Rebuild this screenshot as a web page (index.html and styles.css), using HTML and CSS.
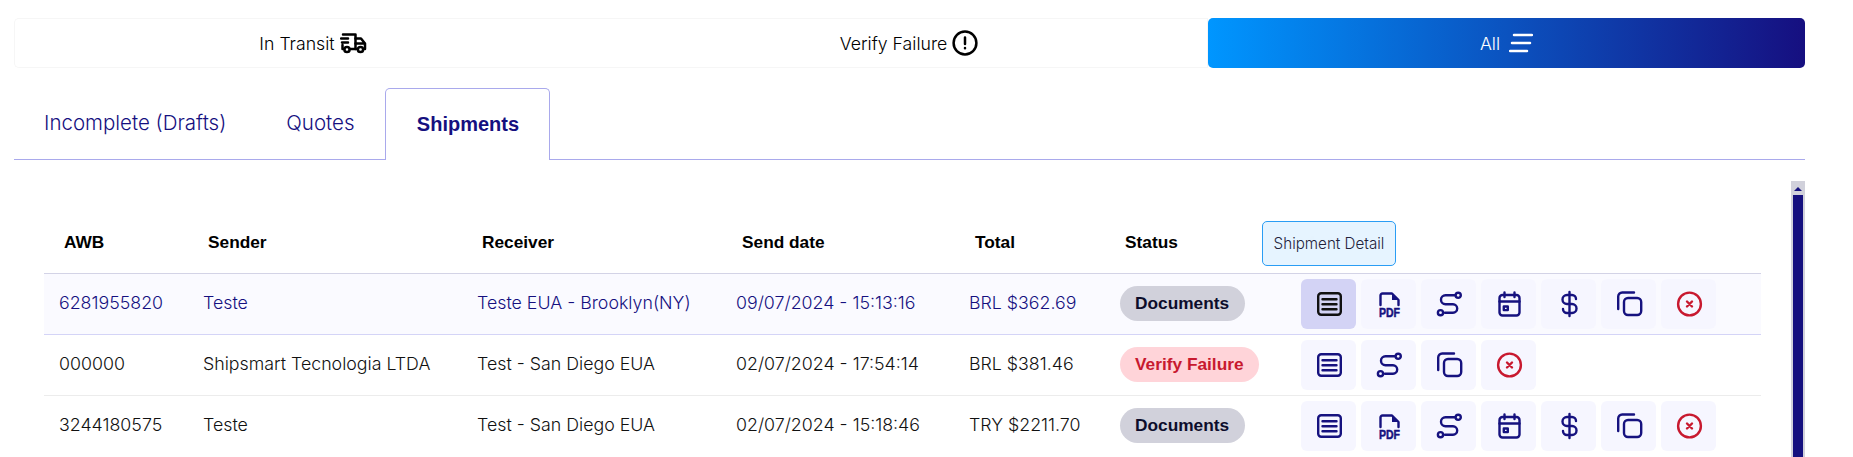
FILE: index.html
```html
<!DOCTYPE html>
<html lang="en">
<head>
    <meta charset="UTF-8">
    <title>Shipments</title>
    <link rel="stylesheet" href="styles.css">
</head>
<body>
    <svg class="icon-defs" width="0" height="0">
        <symbol id="i-detail" viewBox="0 0 30 30">
            <rect x="4.2" y="4.3" width="22.6" height="21.4" rx="3"/>
            <path d="M8.5 10.3H22.5M8.5 15.3H22.5M8.5 20.3H22.5"/>
        </symbol>
        <symbol id="i-route" viewBox="0 0 30 30">
            <circle cx="24.2" cy="6.3" r="2.6"/>
            <circle cx="6.5" cy="23.7" r="2.6"/>
            <path d="M20.6 6.3H11.5a4.5 4.5 0 0 0 0 9H19a4.2 4.2 0 0 1 0 8.4H11"/>
        </symbol>
        <symbol id="i-calendar" viewBox="0 0 30 30">
            <rect x="5.5" y="6" width="20" height="20.5" rx="3"/>
            <path d="M5.5 12.5H25.5M10.5 3.5V8M20.5 3.5V8"/>
            <rect class="solid" x="9.8" y="17.5" width="4" height="3.6"/>
        </symbol>
        <symbol id="i-dollar" viewBox="0 0 30 30">
            <path d="M22 10a4 4 0 0 0-4-4H13a4.5 4.5 0 0 0 0 9h5a4.5 4.5 0 0 1 0 9H13a4 4 0 0 1-4-4M15.5 3V27"/>
        </symbol>
        <symbol id="i-copy" viewBox="0 0 30 30">
            <rect x="10" y="9" width="17.2" height="17" rx="4"/>
            <path d="M4.2 20V7.5A4 4 0 0 1 8.2 3.5H20"/>
        </symbol>
        <symbol id="i-cancel" viewBox="0 0 30 30">
            <circle cx="15.5" cy="15" r="11.4"/>
            <path d="M13 12.5L18 17.5M18 12.5L13 17.5"/>
        </symbol>
    </svg>

    <div class="filters">
        <button class="filter">In Transit
            <svg class="filter-icon" width="27" height="22" viewBox="0 0 27 22">
                <path d="M3 2.5H15.5V17H9.8M4.2 17H2.5V13M1 6.5H8M2 10.5H8"/>
                <path d="M15.5 6.5H21L25 11.5V17H23.3M15.5 11.5H25M15.5 17H17.7"/>
                <circle cx="7" cy="17.5" r="2.6"/>
                <circle cx="20.5" cy="17.5" r="2.6"/>
            </svg>
        </button>
        <button class="filter">Verify Failure
            <svg class="filter-icon" width="26" height="26" viewBox="0 0 26 26">
                <circle cx="13" cy="13" r="11.4"/>
                <path d="M13 7.5V14M13 18V18.2"/>
            </svg>
        </button>
        <button class="filter active">All
            <svg class="filter-icon" width="24" height="20" viewBox="0 0 24 20">
                <path d="M5 2H23M3 10H21M1 18H18"/>
            </svg>
        </button>
    </div>

    <div class="tabs">
        <a class="tab">Incomplete (Drafts)</a>
        <a class="tab">Quotes</a>
        <a class="tab selected">Shipments</a>
    </div>

    <div class="panel">
        <div class="table-wrap">
            <table class="shipments">
                <colgroup>
                    <col class="c-awb"><col class="c-sender"><col class="c-receiver">
                    <col class="c-date"><col class="c-total"><col class="c-status"><col>
                </colgroup>
                <thead>
                    <tr>
                        <th>AWB</th>
                        <th>Sender</th>
                        <th>Receiver</th>
                        <th>Send date</th>
                        <th>Total</th>
                        <th>Status</th>
                        <th class="th-actions">Actions<span class="tooltip">Shipment Detail</span></th>
                    </tr>
                </thead>
                <tbody>
                    <tr class="hovered">
                        <td>6281955820</td>
                        <td>Teste</td>
                        <td>Teste EUA - Brooklyn(NY)</td>
                        <td>09/07/2024 - 15:13:16</td>
                        <td>BRL $362.69</td>
                        <td><span class="badge">Documents</span></td>
                        <td>
                            <div class="actions">
                                <button class="act focus"><svg><use href="#i-detail"/></svg></button>
                                <button class="act">
                                    <svg viewBox="0 0 30 30">
                                        <path d="M6.5 16V6.5a2 2 0 0 1 2-2H18L24.5 11V16"/>
                                        <path class="solid" d="M18 5L24 11H18Z"/>
                                        <text class="pdf-text" x="5" y="27.5" textLength="21" lengthAdjust="spacingAndGlyphs">PDF</text>
                                    </svg>
                                </button>
                                <button class="act"><svg><use href="#i-route"/></svg></button>
                                <button class="act"><svg><use href="#i-calendar"/></svg></button>
                                <button class="act"><svg><use href="#i-dollar"/></svg></button>
                                <button class="act"><svg><use href="#i-copy"/></svg></button>
                                <button class="act red"><svg><use href="#i-cancel"/></svg></button>
                            </div>
                        </td>
                    </tr>
                    <tr>
                        <td>000000</td>
                        <td>Shipsmart Tecnologia LTDA</td>
                        <td>Test - San Diego EUA</td>
                        <td>02/07/2024 - 17:54:14</td>
                        <td>BRL $381.46</td>
                        <td><span class="badge fail">Verify Failure</span></td>
                        <td>
                            <div class="actions">
                                <button class="act"><svg><use href="#i-detail"/></svg></button>
                                <button class="act"><svg><use href="#i-route"/></svg></button>
                                <button class="act"><svg><use href="#i-copy"/></svg></button>
                                <button class="act red"><svg><use href="#i-cancel"/></svg></button>
                            </div>
                        </td>
                    </tr>
                    <tr>
                        <td>3244180575</td>
                        <td>Teste</td>
                        <td>Test - San Diego EUA</td>
                        <td>02/07/2024 - 15:18:46</td>
                        <td>TRY $2211.70</td>
                        <td><span class="badge">Documents</span></td>
                        <td>
                            <div class="actions">
                                <button class="act"><svg><use href="#i-detail"/></svg></button>
                                <button class="act">
                                    <svg viewBox="0 0 30 30">
                                        <path d="M6.5 16V6.5a2 2 0 0 1 2-2H18L24.5 11V16"/>
                                        <path class="solid" d="M18 5L24 11H18Z"/>
                                        <text class="pdf-text" x="5" y="27.5" textLength="21" lengthAdjust="spacingAndGlyphs">PDF</text>
                                    </svg>
                                </button>
                                <button class="act"><svg><use href="#i-route"/></svg></button>
                                <button class="act"><svg><use href="#i-calendar"/></svg></button>
                                <button class="act"><svg><use href="#i-dollar"/></svg></button>
                                <button class="act"><svg><use href="#i-copy"/></svg></button>
                                <button class="act red"><svg><use href="#i-cancel"/></svg></button>
                            </div>
                        </td>
                    </tr>
                </tbody>
            </table>
        </div>
        <div class="scrollbar">
            <div class="scroll-arrow"></div>
            <div class="scroll-thumb"></div>
        </div>
    </div>
</body>
</html>
```

FILE: styles.css
```css
html {
    overflow: hidden;
}
body {
    margin: 0;
    padding: 18px 48px 0 14px;
    height: 439px;
    overflow: hidden;
    background: white;
    font-family: Inter, "Liberation Sans", sans-serif;
    color: #111;
}
.icon-defs {
    position: absolute;
}
.filters {
    display: grid;
    grid-template-columns: repeat(3, 1fr);
    height: 50px;
}
.filter {
    display: flex;
    align-items: center;
    justify-content: center;
    gap: 5px;
    border: 1px solid #f6f6f6;
    background: white;
    font-family: inherit;
    font-size: 17.7px;
    font-weight: 300;
    color: #000;
    padding: 0;
}
.filter:first-child {
    border-right: none;
    border-radius: 5px 0 0 5px;
}
.filter:nth-child(2) {
    border-left: none;
}
.filter.active {
    border: none;
    border-radius: 5px;
    color: white;
    gap: 9px;
    background: linear-gradient(to right, #0096ff, #160f80);
}
.filter-icon {
    fill: none;
    stroke: #000;
    stroke-width: 2.5;
    stroke-linecap: round;
    stroke-linejoin: round;
}
.active .filter-icon {
    stroke: white;
}
.tabs {
    display: flex;
    height: 71px;
    margin-top: 20px;
    border-bottom: 1px solid #a9a9ec;
}
.tab {
    display: flex;
    align-items: center;
    padding: 0 30px 2px;
    font-size: 20.5px;
    font-weight: 300;
    color: #15107f;
}
.tab.selected {
    height: 72px;
    box-sizing: border-box;
    width: 165px;
    justify-content: center;
    padding: 0;
    margin-left: 1px;
    background: white;
    border: 1px solid #a9a9ec;
    border-bottom: none;
    border-radius: 5px 5px 0 0;
    font-family: "Liberation Sans", sans-serif;
    font-size: 20px;
    font-weight: 700;
}
.panel {
    display: flex;
    margin-top: 21px;
}
.table-wrap {
    flex: 1;
    padding: 0 30px;
}
.shipments {
    width: 100%;
    table-layout: fixed;
    border-collapse: collapse;
}
.c-awb { width: 144px; }
.c-sender { width: 274px; }
.c-receiver { width: 259px; }
.c-date { width: 233px; }
.c-total { width: 150px; }
.c-status { width: 181px; }
th {
    height: 92px;
    box-sizing: border-box;
    padding: 0 0 21px 21px;
    vertical-align: bottom;
    text-align: left;
    font-family: "Liberation Sans", sans-serif;
    font-size: 17.3px;
    line-height: 20px;
    font-weight: 700;
    color: #000;
}
th:nth-child(-n+3) {
    padding-left: 20px;
}
.th-actions {
    position: relative;
    color: #dcdcdc;
}
.tooltip {
    position: absolute;
    left: -23px;
    top: 40px;
    width: 134px;
    height: 45px;
    box-sizing: border-box;
    display: flex;
    align-items: center;
    justify-content: center;
    background: rgba(229, 244, 255, 0.97);
    border: 1px solid #2a9df4;
    border-radius: 5px;
    font-family: Inter, sans-serif;
    font-size: 15.2px;
    font-weight: 300;
    color: #22223a;
}
td {
    height: 61px;
    box-sizing: border-box;
    padding: 0 0 2px 15px;
    border-top: 1px solid #ececec;
    font-size: 17.8px;
    font-weight: 300;
}
thead + tbody tr:first-child td {
    border-top: 1px solid #d3d3e6;
}
tr.hovered td {
    background: #fafaff;
    color: #15107f;
    border-bottom: 1px solid #d4d4f7;
}
td:nth-child(n+6) {
    padding: 0 0 0 16px;
}
.badge {
    display: inline-block;
    height: 35px;
    line-height: 35px;
    padding: 0 15.5px 0 15px;
    border-radius: 18px;
    background: #d1d1db;
    color: #0d0d2b;
    font-family: "Liberation Sans", sans-serif;
    font-size: 17.3px;
    font-weight: 700;
}
.badge.fail {
    background: #ffd4d9;
    color: #c8192f;
}
.actions {
    display: flex;
    gap: 5px;
}
.act {
    width: 55px;
    height: 50px;
    padding: 0;
    display: flex;
    align-items: center;
    justify-content: center;
    border: none;
    border-radius: 6px;
    background: #f6f6ff;
}
.act svg {
    width: 30px;
    height: 30px;
    fill: none;
    stroke: #16127f;
    stroke-width: 2.4;
    stroke-linecap: round;
    stroke-linejoin: round;
}
.act .solid {
    fill: #16127f;
    stroke: none;
}
.pdf-text {
    font-family: "Liberation Sans", sans-serif;
    font-size: 12.5px;
    font-weight: 700;
    fill: #16127f;
    stroke: #16127f;
    stroke-width: 0.5;
}
.act.focus {
    background: #d3d3f5;
}
.act.focus svg {
    stroke: #111;
}
.act.red svg {
    stroke: #c8192f;
}
.scrollbar {
    width: 14px;
    height: 276px;
    box-sizing: border-box;
    padding: 0 2px;
    background: #d1d1db;
}
.scroll-arrow {
    width: 0;
    margin: 6px auto 4px;
    border-left: 4px solid transparent;
    border-right: 4px solid transparent;
    border-bottom: 4px solid #16127f;
}
.scroll-thumb {
    height: 262px;
    background: #15107f;
}
```
